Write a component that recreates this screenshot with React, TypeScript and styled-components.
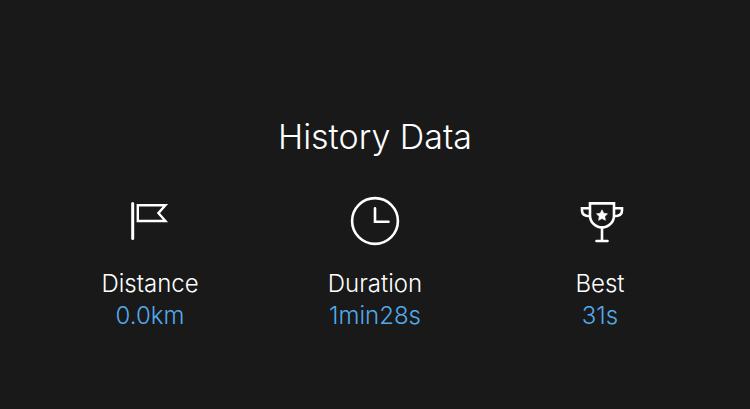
import React from "react";
import styled, { createGlobalStyle } from "styled-components";

const GlobalStyle = createGlobalStyle`
  body {
    margin: 0;
    background: #191919;
    color: #fff;
    font-family: Inter, "Liberation Sans", sans-serif;
    font-weight: 350;
  }
`;

const Panel = styled.main`
  box-sizing: border-box;
  min-height: 100vh;
  padding: 115px 5% 64px;
`;

const Title = styled.h1`
  margin: 0 0 37px;
  font-size: 34px;
  font-weight: 350;
  line-height: 44px;
  text-align: center;
`;

const Stats = styled.dl`
  display: grid;
  grid-template-columns: repeat(3, 1fr);
  margin: 0;
`;

const Stat = styled.div`
  display: flex;
  flex-direction: column;
  align-items: center;
  font-size: 24px;
  line-height: 32px;
`;

const Label = styled.dt`
  margin-top: 22px;
`;

const Value = styled.dd`
  margin: 0;
  color: #52a9ea;
`;

const Icon = styled.svg`
  display: block;
  width: 50px;
  height: 50px;
  fill: none;
  stroke: #fff;
`;

const FlagIcon = () => (
  <Icon viewBox="0 0 50 50" strokeWidth="2.4" aria-hidden="true">
    <path d="M7.7 7.5v35" strokeWidth="3" strokeLinecap="round" />
    <path d="M12.8 9.2h27.6l-7 7.9 7 7.9H12.8z" />
  </Icon>
);

const ClockIcon = () => (
  <Icon viewBox="0 0 50 50" strokeWidth="2.6" aria-hidden="true">
    <circle cx="25" cy="25" r="22.9" />
    <path d="M25 12.3v13.4h13.5" strokeLinecap="round" />
  </Icon>
);

const TrophyIcon = () => (
  <Icon viewBox="0 0 50 50" strokeWidth="2.6" aria-hidden="true">
    <path d="M15 7.4h24v12a12 12 0 0 1-24 0z" />
    <path d="M15 12.2H7v2.4c0 4 3 5.7 8 5.7M39 12.2h8v2.4c0 4-3 5.7-8 5.7" />
    <path d="M27 31.5V45M21.5 45h11" strokeLinecap="round" />
    <path
      d="M27 13.8l1.7 3.4 3.8.6-2.7 2.7.6 3.8-3.4-1.8-3.4 1.8.6-3.8-2.7-2.7 3.8-.6z"
      fill="#fff"
      strokeWidth="0.6"
      strokeLinejoin="round"
    />
  </Icon>
);

const stats = [
  { label: "Distance", value: "0.0km", Glyph: FlagIcon },
  { label: "Duration", value: "1min28s", Glyph: ClockIcon },
  { label: "Best", value: "31s", Glyph: TrophyIcon },
];

export default function App() {
  return (
    <>
      <GlobalStyle />
      <Panel>
        <Title>History Data</Title>
        <Stats>
          {stats.map(({ label, value, Glyph }) => (
            <Stat key={label}>
              <Glyph />
              <Label>{label}</Label>
              <Value>{value}</Value>
            </Stat>
          ))}
        </Stats>
      </Panel>
    </>
  );
}
